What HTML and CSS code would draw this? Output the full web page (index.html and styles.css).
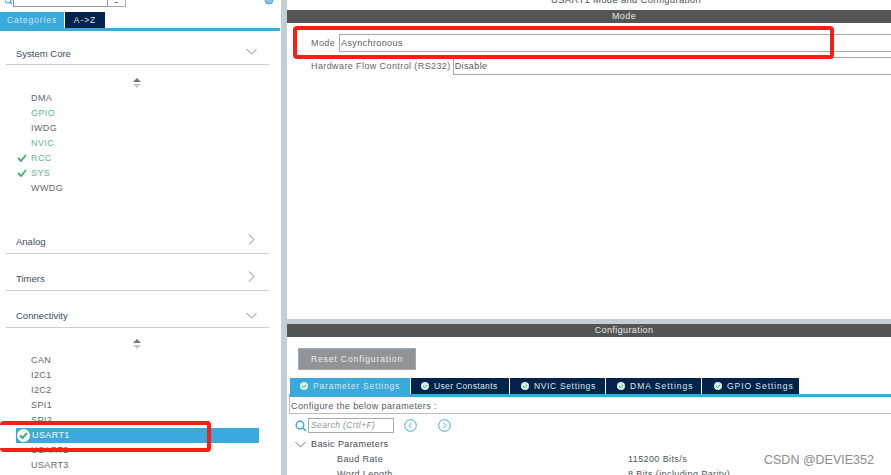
FILE: index.html
```html
<!DOCTYPE html>
<html lang="en">
<head>
<meta charset="utf-8">
<title>USART1 Mode and Configuration</title>
<link rel="stylesheet" href="styles.css">
</head>
<body>
<div class="app">
  <aside class="left">
    <div class="search-row">
      <svg class="top-ic" width="8" height="6" viewBox="0 0 8 6"><circle cx="3" cy="0" r="3" fill="none" stroke="#3ea8dc" stroke-width="1.2"/><path d="M5 2l2 2" stroke="#3ea8dc" stroke-width="1.2"/></svg>
      <div class="search-box"></div>
      <div class="search-drop"><span class="drop-dot"></span></div>
      <svg class="gear" width="10" height="6" viewBox="0 0 10 6"><circle cx="5" cy="0" r="4" fill="#8fc5e4" stroke="#3ea8dc"/></svg>
    </div>
    <div class="cat-tabs">
      <div class="cat-tab active">Categories</div>
      <div class="cat-tab">A-&gt;Z</div>
    </div>
    <div class="section first">
      <span>System Core</span>
      <svg class="chev" width="11" height="7" viewBox="0 0 11 7"><path d="M.5 1l5 5 5-5" fill="none" stroke="#7b848b"/></svg>
    </div>
    <svg class="sorter" width="8" height="10" viewBox="0 0 8 10"><path d="M4 0l4 4H0z" fill="#6f7579"/><path d="M4 10l4-4H0z" fill="#c3c7ca"/></svg>
    <ul class="list core">
      <li>DMA</li>
      <li class="ok">GPIO</li>
      <li>IWDG</li>
      <li class="ok">NVIC</li>
      <li class="ok"><svg class="tick" width="10" height="8" viewBox="0 0 10 8"><path d="M1 4l3 3 5-6" fill="none" stroke="#3fae6b" stroke-width="1.8"/></svg>RCC</li>
      <li class="ok"><svg class="tick" width="10" height="8" viewBox="0 0 10 8"><path d="M1 4l3 3 5-6" fill="none" stroke="#3fae6b" stroke-width="1.8"/></svg>SYS</li>
      <li>WWDG</li>
    </ul>
    <div class="section analog">
      <span>Analog</span>
      <svg class="chev side" width="7" height="11" viewBox="0 0 7 11"><path d="M1 .5l5 5-5 5" fill="none" stroke="#7b848b"/></svg>
    </div>
    <div class="section next">
      <span>Timers</span>
      <svg class="chev side" width="7" height="11" viewBox="0 0 7 11"><path d="M1 .5l5 5-5 5" fill="none" stroke="#7b848b"/></svg>
    </div>
    <div class="section next">
      <span>Connectivity</span>
      <svg class="chev" width="11" height="7" viewBox="0 0 11 7"><path d="M.5 1l5 5 5-5" fill="none" stroke="#7b848b"/></svg>
    </div>
    <svg class="sorter conn" width="8" height="10" viewBox="0 0 8 10"><path d="M4 0l4 4H0z" fill="#6f7579"/><path d="M4 10l4-4H0z" fill="#c3c7ca"/></svg>
    <ul class="list">
      <li>CAN</li>
      <li>I2C1</li>
      <li>I2C2</li>
      <li>SPI1</li>
      <li>SPI2</li>
      <li class="selected"><svg class="badge" width="13" height="13" viewBox="0 0 13 13"><circle cx="6.5" cy="6.5" r="6.5" fill="#fff"/><path d="M3 6.5l2.5 2.5 4.5-5" fill="none" stroke="#3fae6b" stroke-width="2"/></svg>USART1</li>
      <li>USART2</li>
      <li>USART3</li>
    </ul>
  </aside>
  <main class="right">
    <div class="title">USART1 Mode and Configuration</div>
    <div class="bar">Mode</div>
    <div class="mode-pane">
      <div class="field mode-field"><label>Mode</label><div class="input">Asynchronous</div></div>
      <div class="field"><label>Hardware Flow Control (RS232)</label><div class="input">Disable</div></div>
    </div>
    <div class="split"></div>
    <div class="bar">Configuration</div>
    <button class="reset" type="button">Reset Configuration</button>
    <div class="tabs">
      <div class="tab active"><svg class="dot" width="8" height="8" viewBox="0 0 8 8"><circle cx="4" cy="4" r="4" fill="#d5efe2"/><path d="M2 4l1.5 1.5L6 3" fill="none" stroke="#3fae6b"/></svg>Parameter Settings</div>
      <div class="tab tab-user"><svg class="dot" width="8" height="8" viewBox="0 0 8 8"><circle cx="4" cy="4" r="4" fill="#d5efe2"/><path d="M2 4l1.5 1.5L6 3" fill="none" stroke="#3fae6b"/></svg>User Constants</div>
      <div class="tab tab-nvic"><svg class="dot" width="8" height="8" viewBox="0 0 8 8"><circle cx="4" cy="4" r="4" fill="#d5efe2"/><path d="M2 4l1.5 1.5L6 3" fill="none" stroke="#3fae6b"/></svg>NVIC Settings</div>
      <div class="tab tab-dma"><svg class="dot" width="8" height="8" viewBox="0 0 8 8"><circle cx="4" cy="4" r="4" fill="#d5efe2"/><path d="M2 4l1.5 1.5L6 3" fill="none" stroke="#3fae6b"/></svg>DMA Settings</div>
      <div class="tab tab-gpio"><svg class="dot" width="8" height="8" viewBox="0 0 8 8"><circle cx="4" cy="4" r="4" fill="#d5efe2"/><path d="M2 4l1.5 1.5L6 3" fill="none" stroke="#3fae6b"/></svg>GPIO Settings</div>
    </div>
    <div class="configure">Configure the below parameters :</div>
    <div class="search-line">
      <svg width="12" height="12" viewBox="0 0 12 12"><circle cx="5" cy="5" r="3.8" fill="none" stroke="#3ea8dc" stroke-width="1.4"/><path d="M8 8l3 3" stroke="#3ea8dc" stroke-width="1.6"/></svg>
      <div class="param-search">Search (Crtl+F)</div>
      <svg class="nav" width="13" height="13" viewBox="0 0 13 13"><circle cx="6.5" cy="6.5" r="5.8" fill="none" stroke="#3ea8dc"/><path d="M7.5 4l-2.5 2.500 2.500 2.500" fill="none" stroke="#3ea8dc"/></svg>
      <svg class="nav" width="13" height="13" viewBox="0 0 13 13"><circle cx="6.5" cy="6.5" r="5.8" fill="none" stroke="#3ea8dc"/><path d="M5.500 4l2.500 2.500-2.500 2.500" fill="none" stroke="#3ea8dc"/></svg>
    </div>
    <div class="group"><svg width="11" height="7" viewBox="0 0 11 7"><path d="M.5 1l5 5 5-5" fill="none" stroke="#6f7579"/></svg>Basic Parameters</div>
    <div class="param"><span>Baud Rate</span><span>115200 Bits/s</span></div>
    <div class="param"><span>Word Length</span><span>8 Bits (including Parity)</span></div>
  </main>
</div>
<div class="mark mark-mode"></div>
<div class="mark mark-usart"></div>
<div class="watermark">CSDN @DEVIE352</div>
</body>
</html>
```
FILE: styles.css
```css
* { box-sizing: border-box; }
html, body { margin: 0; padding: 0; }
body {
  width: 891px;
  height: 475px;
  overflow: hidden;
  position: relative;
  background: #fff;
  font-family: "Liberation Sans", Arial, sans-serif;
  font-size: 9px;
  letter-spacing: .4px;
  color: #4d5257;
}
.app { display: flex; height: 475px; }
.left {
  flex: 0 0 281px;
  width: 281px;
  overflow: hidden;
}
.search-row { height: 12px; display: flex; align-items: flex-start; padding-left: 5px; }
.search-box { width: 95px; height: 7px; border: 1px solid #8f969b; border-top: 0; background: #fff; }
.search-drop { width: 18px; height: 7px; border: 1px solid #a4a9ad; border-top: 0; border-left: 0; display: flex; justify-content: center; }
.drop-dot { width: 3px; height: 1px; margin-top: 2px; background: #6f7579; }
.gear { margin-left: auto; margin-right: 7px; }
.cat-tabs {
  display: flex;
  height: 19px;
  border-bottom: 3px solid #3aa9dc;
  gap: 1px;
  margin-right: 1px;
}
.cat-tab {
  width: 40px;
  height: 16px;
  background: #03234b;
  color: #d8e3ec;
  font-size: 8.5px;
  letter-spacing: .9px;
  display: flex;
  align-items: center;
  justify-content: center;
}
.cat-tab.active { width: 64px; background: #3aa9dc; }
.section {
  margin: 0 12px 0 6px;
  height: 45px;
  padding: 0 12px 4px 10px;
  border-bottom: 1px solid #c6d0d8;
  display: flex;
  align-items: flex-end;
  justify-content: space-between;
  font-size: 9.5px;
  letter-spacing: 0;
  color: #3d4a68;
  line-height: 14px;
}
.section .chev { margin-bottom: 4px; }
.section .chev.side { margin-right: 2px; }
.section.first { height: 34px; padding-bottom: 3px; }
.section.first .chev { margin-bottom: 6px; }
.section.analog { height: 57px; }
.section.next { height: 37px; }
.sorter { display: block; margin: 13px 0 0 133px; }
.sorter.conn { margin-top: 11px; }
.list { list-style: none; margin: 4px 0 0; padding: 0; }
.core { height: 106px; margin-top: 3px; }
.list li {
  height: 15px;
  line-height: 15px;
  padding-left: 31px;
  font-size: 9px;
  position: relative;
  color: #62676b;
}
.list li.ok { color: #5cb98a; }
.tick { position: absolute; left: 17px; top: 3px; }
.list li.selected {
  background: #3aa9dc;
  color: #fff;
  margin: 0 22px 0 16px;
  padding-left: 16px;
}
.badge { position: absolute; left: 1px; top: 1px; }
.right { flex: 1; min-width: 0; border-left: 6px solid #c4ced3; overflow: hidden; }
.title {
  height: 10px;
  line-height: 0;
  padding-left: 74px;
  text-align: center;
  font-size: 9.5px;
  letter-spacing: .3px;
}
.bar {
  height: 13px;
  line-height: 13px;
  padding-left: 70px;
  background: #545654;
  color: #e6e8e6;
  text-align: center;
  font-size: 9px;
}
.mode-pane { height: 296px; padding-top: 11px; }
.field { height: 18px; display: flex; align-items: stretch; margin-bottom: 5px; padding-left: 24px; }
.field label { display: flex; align-items: center; padding-right: 2px; color: #62676b; white-space: nowrap; }
.mode-field label { width: 28px; padding-right: 0; }
.input {
  flex: 1;
  border: 1px solid #a4aaae;
  border-right: 0;
  padding-left: 1px;
  display: flex;
  align-items: center;
  color: #55595d;
}
.split { height: 5px; background: #c4ced3; }
.reset {
  display: block;
  margin: 11px 0 0 11px;
  width: 118px;
  height: 22px;
  background: #8e9498;
  border: 1px solid #a4aaad;
  color: #eef0f1;
  font: 8.5px "Liberation Sans", Arial, sans-serif;
  letter-spacing: .9px;
  padding: 0;
}
.tabs {
  display: flex;
  height: 18px;
  margin: 8px 0 0 3px;
  gap: 1px;
}
.tab {
  width: 120px;
  height: 16px;
  padding: 0 0 0 10px;
  background: #03234b;
  color: #dfe6ec;
  font-size: 8.5px;
  letter-spacing: .8px;
  display: flex;
  align-items: center;
  gap: 5px;
  white-space: nowrap;
}
.tab.active { background: #3aa9dc; }
.tab-user { width: 98px; letter-spacing: .35px; }
.tab-nvic { width: 95px; letter-spacing: .65px; padding-left: 11px; }
.tab-dma { width: 95px; letter-spacing: 1px; padding-left: 11px; }
.tab-gpio { width: 97px; letter-spacing: .95px; padding-left: 12px; }
.dot { flex: none; }
.configure {
  height: 20px;
  line-height: 18px;
  border: 1px solid #b9bec2;
  border-right: 0;
  border-top: 3px solid #3aa9dc;
  margin-top: -2px;
  margin-left: 2px;
  padding-left: 1px;
  color: #55595d;
}
.search-line { display: flex; align-items: center; height: 17px; padding-left: 8px; margin-top: 3px; }
.param-search {
  width: 86px;
  height: 15px;
  line-height: 13px;
  margin-left: 1px;
  padding-left: 2px;
  border: 1px solid #a4aaae;
  font-style: italic;
  font-size: 8.5px;
  color: #8d9296;
}
.nav { margin-left: 10px; }
.nav + .nav { margin-left: 21px; }
.group {
  display: flex;
  align-items: center;
  gap: 5px;
  height: 16px;
  margin-top: 2px;
  padding-left: 8px;
  color: #3f4347;
}
.param {
  display: flex;
  height: 15px;
  line-height: 15px;
  padding-left: 50px;
  color: #4d5257;
}
.param span:first-child { width: 291px; }
.mark { position: absolute; border: 4px solid #fa1e14; border-radius: 4px; }
.mark-mode { left: 293px; top: 26px; width: 541px; height: 33px; }
.mark-usart { left: 0; top: 421px; width: 211px; height: 31px; border-left: 0; }
.watermark {
  position: absolute;
  left: 764px;
  top: 453px;
  font-size: 12.5px;
  letter-spacing: 0;
  color: #8c8c8c;
}
```
